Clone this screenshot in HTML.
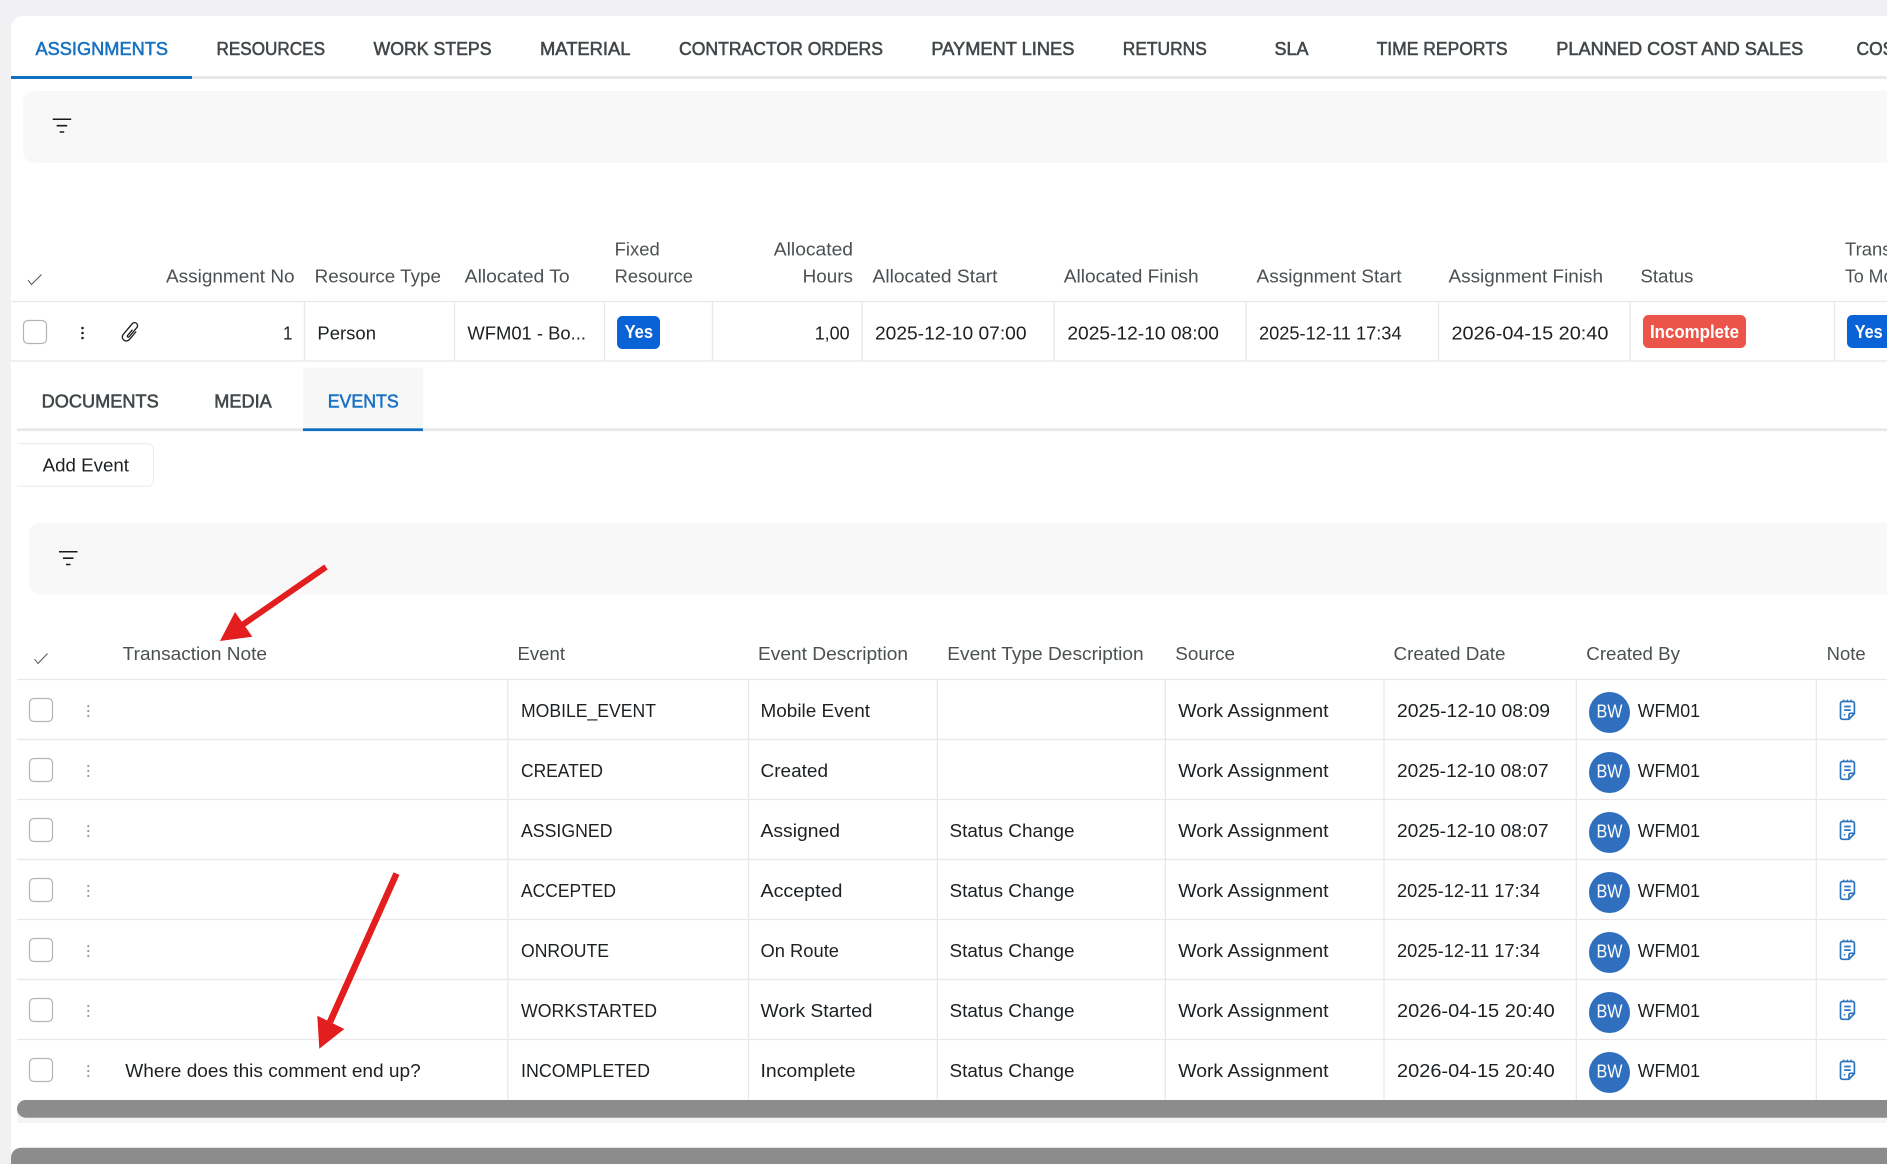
<!DOCTYPE html>
<html lang="en">
<head>
<meta charset="utf-8">
<title>Assignments</title>
<style>
html,body{margin:0;padding:0;width:1887px;height:1164px;overflow:hidden;background:#f1f0f3}
svg{display:block;font-family:"Liberation Sans",sans-serif;font-size:18px}
.t{fill:#42474a;stroke:#42474a;stroke-width:.55}
.a{fill:#1a72c2;stroke:#1a72c2;stroke-width:.55}
.h{fill:#4b5053}
.c{fill:#1c2023}
.l{stroke:#e8e8e8;stroke-width:1.3;fill:none}
.b{fill:#fff;font-weight:bold}
</style>
</head>
<body>
<svg width="1887" height="1164" viewBox="0 0 1887 1164" xmlns="http://www.w3.org/2000/svg">
<defs>
<symbol id="cb" overflow="visible"><rect x=".5" y=".5" width="23" height="23" rx="4.500" fill="#fff" stroke="#b4b4b4" stroke-width="1.200"/></symbol>
<symbol id="dg" overflow="visible"><circle cx="0" cy="0" r="1.100" fill="#9a9a9a"/><circle cx="0" cy="5" r="1.100" fill="#9a9a9a"/><circle cx="0" cy="10" r="1.100" fill="#9a9a9a"/></symbol>
<symbol id="fl" overflow="visible"><path d="M0 .75H18.500M4 7.200H14.500M7 13.500H11.500" stroke="#1a1a1a" stroke-width="1.600" fill="none"/></symbol>
<symbol id="nt" overflow="visible"><g fill="none" stroke="#2a74c0" stroke-width="1.700"><path d="M2.800 2.200H12.700a2 2 0 0 1 2 2V14.200L9.200 20H2.800a2 2 0 0 1-2-2V4.200a2 2 0 0 1 2-2z"/><path d="M14.700 14H10.800a1.500 1.500 0 0 0-1.500 1.500V20"/><path d="M4.500 7.200H11M4.500 10.800H11"/><path d="M4 15.500H5.500" stroke-width="1.500"/><path d="M4 .3V1.800M7.700 .3V1.800M11.400 .3V1.800" stroke-width="1.300"/></g></symbol>
<symbol id="av" overflow="visible"><circle cx="20.500" cy="20.500" r="20.500" fill="#2f6fbd"/><text x="7.500" y="25.500" fill="#fff" textLength="26" lengthAdjust="spacingAndGlyphs">BW</text></symbol>
</defs>

<!-- card -->
<path d="M11 1164V28a12 12 0 0 1 12-12H1887V1164z" fill="#fff"/>

<!-- top tabs -->
<rect x="11" y="76" width="1876" height="3" fill="#e8e8e8"/>
<rect x="11" y="76" width="181" height="3" fill="#1170c4"/>
<text class="a" x="35.500" y="55" textLength="132.500" lengthAdjust="spacingAndGlyphs">ASSIGNMENTS</text>
<text class="t" x="216.500" y="55" textLength="108.500" lengthAdjust="spacingAndGlyphs">RESOURCES</text>
<text class="t" x="373.500" y="55" textLength="118" lengthAdjust="spacingAndGlyphs">WORK STEPS</text>
<text class="t" x="540" y="55" textLength="90.500" lengthAdjust="spacingAndGlyphs">MATERIAL</text>
<text class="t" x="679" y="55" textLength="204" lengthAdjust="spacingAndGlyphs">CONTRACTOR ORDERS</text>
<text class="t" x="931.400" y="55" textLength="143" lengthAdjust="spacingAndGlyphs">PAYMENT LINES</text>
<text class="t" x="1122.800" y="55" textLength="84" lengthAdjust="spacingAndGlyphs">RETURNS</text>
<text class="t" x="1274.500" y="55" textLength="34" lengthAdjust="spacingAndGlyphs">SLA</text>
<text class="t" x="1376.600" y="55" textLength="131" lengthAdjust="spacingAndGlyphs">TIME REPORTS</text>
<text class="t" x="1556.300" y="55" textLength="247" lengthAdjust="spacingAndGlyphs">PLANNED COST AND SALES</text>
<text class="t" x="1856.500" y="55" textLength="60" lengthAdjust="spacingAndGlyphs">COSTS</text>

<!-- filter bar 1 -->
<rect x="23" y="91" width="1900" height="72" rx="11" fill="#f8f8f8"/>
<use href="#fl" x="52.700" y="118.500"/>

<!-- assignments header -->
<path d="M28 280L31.500 284.500L41.500 274.500" fill="none" stroke="#555" stroke-width="1"/>
<text class="h" x="166" y="282.700" textLength="128.600" lengthAdjust="spacingAndGlyphs">Assignment No</text>
<text class="h" x="314.700" y="282.700" textLength="126.300" lengthAdjust="spacingAndGlyphs">Resource Type</text>
<text class="h" x="464.700" y="282.700" textLength="105" lengthAdjust="spacingAndGlyphs">Allocated To</text>
<text class="h" x="614.700" y="255.500" textLength="45" lengthAdjust="spacingAndGlyphs">Fixed</text>
<text class="h" x="614.700" y="282.700" textLength="78.300" lengthAdjust="spacingAndGlyphs">Resource</text>
<text class="h" x="773.800" y="255.500" textLength="79.200" lengthAdjust="spacingAndGlyphs">Allocated</text>
<text class="h" x="802.700" y="282.700" textLength="50.300" lengthAdjust="spacingAndGlyphs">Hours</text>
<text class="h" x="872.500" y="282.700" textLength="125" lengthAdjust="spacingAndGlyphs">Allocated Start</text>
<text class="h" x="1063.800" y="282.700" textLength="134.800" lengthAdjust="spacingAndGlyphs">Allocated Finish</text>
<text class="h" x="1256.500" y="282.700" textLength="145" lengthAdjust="spacingAndGlyphs">Assignment Start</text>
<text class="h" x="1448.500" y="282.700" textLength="154.500" lengthAdjust="spacingAndGlyphs">Assignment Finish</text>
<text class="h" x="1640.400" y="282.700" textLength="53" lengthAdjust="spacingAndGlyphs">Status</text>
<text class="h" x="1845" y="255.500" textLength="68" lengthAdjust="spacingAndGlyphs">Transfer</text>
<text class="h" x="1845" y="282.700" textLength="76" lengthAdjust="spacingAndGlyphs">To Mobile</text>

<!-- assignments row -->
<path class="l" d="M11 301.500H1887M11 361H1887M304.500 301.500V361M454.500 301.500V361M604.500 301.500V361M712.500 301.500V361M862 301.500V361M1054 301.500V361M1246 301.500V361M1438.500 301.500V361M1630 301.500V361M1834.500 301.500V361"/>
<use href="#cb" x="23" y="320"/>
<circle cx="82.500" cy="328" r="1.300" fill="#222"/><circle cx="82.500" cy="333" r="1.300" fill="#222"/><circle cx="82.500" cy="338" r="1.300" fill="#222"/>
<path transform="translate(130.500 332) rotate(40)" d="M4 -4V6.500a4 4 0 0 1-8 0V-7.500a3 3 0 0 1 6 0V4.500a1 1 0 0 1-2 0V-3" fill="none" stroke="#1a1a1a" stroke-width="1.300"/>
<text class="c" x="283" y="339.300" textLength="9.500" lengthAdjust="spacingAndGlyphs">1</text>
<text class="c" x="317.400" y="339.300" textLength="58.600" lengthAdjust="spacingAndGlyphs">Person</text>
<text class="c" x="467.400" y="339.300" textLength="118.600" lengthAdjust="spacingAndGlyphs">WFM01 - Bo...</text>
<rect x="617" y="316" width="43" height="33" rx="5.500" fill="#0a63d6"/>
<text class="b" x="624.600" y="338" textLength="28.400" lengthAdjust="spacingAndGlyphs">Yes</text>
<text class="c" x="814.700" y="339.300" textLength="35" lengthAdjust="spacingAndGlyphs">1,00</text>
<text class="c" x="875" y="339.300" textLength="151.500" lengthAdjust="spacingAndGlyphs">2025-12-10 07:00</text>
<text class="c" x="1067.400" y="339.300" textLength="151.500" lengthAdjust="spacingAndGlyphs">2025-12-10 08:00</text>
<text class="c" x="1259" y="339.300" textLength="142.600" lengthAdjust="spacingAndGlyphs">2025-12-11 17:34</text>
<text class="c" x="1451.500" y="339.300" textLength="156.900" lengthAdjust="spacingAndGlyphs">2026-04-15 20:40</text>
<rect x="1643" y="315" width="103" height="33" rx="5.500" fill="#eb5549"/>
<text class="b" x="1650" y="338" textLength="89" lengthAdjust="spacingAndGlyphs">Incomplete</text>
<rect x="1847" y="315" width="60" height="33" rx="5.500" fill="#0a63d6"/>
<text class="b" x="1854.700" y="338" textLength="28" lengthAdjust="spacingAndGlyphs">Yes</text>

<!-- sub tabs -->
<rect x="303" y="368" width="120" height="60" fill="#f7f7f7"/>
<rect x="17" y="428.300" width="1870" height="2.800" fill="#e8e8e8"/>
<rect x="303" y="428.300" width="120" height="2.800" fill="#1170c4"/>
<text class="t" x="41.700" y="407.300" textLength="117" lengthAdjust="spacingAndGlyphs">DOCUMENTS</text>
<text class="t" x="214.300" y="407.300" textLength="57.400" lengthAdjust="spacingAndGlyphs">MEDIA</text>
<text class="a" x="327.700" y="407.300" textLength="71" lengthAdjust="spacingAndGlyphs">EVENTS</text>

<!-- add event -->
<path d="M17 443.800H147.500a6 6 0 0 1 6 6V480.300a6 6 0 0 1-6 6H17" fill="#fff" stroke="#e8e8e8" stroke-width="1"/>
<text class="c" x="42.700" y="471.300" textLength="86.300" lengthAdjust="spacingAndGlyphs">Add Event</text>

<!-- filter bar 2 -->
<rect x="29" y="523.300" width="1900" height="71" rx="11" fill="#f8f8f8"/>
<use href="#fl" x="59" y="551"/>

<!-- events header -->
<path d="M34.500 659L38 663.500L47.500 653.500" fill="none" stroke="#555" stroke-width="1"/>
<text class="h" x="122.700" y="660" textLength="144.300" lengthAdjust="spacingAndGlyphs">Transaction Note</text>
<text class="h" x="517.500" y="660" textLength="47.500" lengthAdjust="spacingAndGlyphs">Event</text>
<text class="h" x="758" y="660" textLength="150" lengthAdjust="spacingAndGlyphs">Event Description</text>
<text class="h" x="947.300" y="660" textLength="196.400" lengthAdjust="spacingAndGlyphs">Event Type Description</text>
<text class="h" x="1175.300" y="660" textLength="59.700" lengthAdjust="spacingAndGlyphs">Source</text>
<text class="h" x="1393.500" y="660" textLength="112" lengthAdjust="spacingAndGlyphs">Created Date</text>
<text class="h" x="1586.300" y="660" textLength="93.700" lengthAdjust="spacingAndGlyphs">Created By</text>
<text class="h" x="1826.700" y="660" textLength="39" lengthAdjust="spacingAndGlyphs">Note</text>

<!-- events grid -->
<path class="l" d="M17 679.500H1887M17 739.500H1887M17 799.500H1887M17 859.500H1887M17 919.500H1887M17 979.500H1887M17 1039.500H1887M507.800 679.500V1100M748.500 679.500V1100M937.300 679.500V1100M1165.300 679.500V1100M1384 679.500V1100M1576.300 679.500V1100M1816.300 679.500V1100"/>

<!-- row 1 -->
<use href="#cb" x="29" y="698"/><use href="#dg" x="88.300" y="706"/>
<text class="c" x="521" y="717" textLength="135" lengthAdjust="spacingAndGlyphs">MOBILE_EVENT</text>
<text class="c" x="760.500" y="717" textLength="109.500" lengthAdjust="spacingAndGlyphs">Mobile Event</text>
<text class="c" x="1178.300" y="717" textLength="150.200" lengthAdjust="spacingAndGlyphs">Work Assignment</text>
<text class="c" x="1397" y="717" textLength="153" lengthAdjust="spacingAndGlyphs">2025-12-10 08:09</text>
<use href="#av" x="1589" y="692"/>
<text class="c" x="1637.700" y="717" textLength="62.300" lengthAdjust="spacingAndGlyphs">WFM01</text>
<use href="#nt" x="1839.700" y="699.300"/>

<!-- row 2 -->
<use href="#cb" x="29" y="758"/><use href="#dg" x="88.300" y="766"/>
<text class="c" x="521" y="777" textLength="82" lengthAdjust="spacingAndGlyphs">CREATED</text>
<text class="c" x="760.500" y="777" textLength="67.500" lengthAdjust="spacingAndGlyphs">Created</text>
<text class="c" x="1178.300" y="777" textLength="150.200" lengthAdjust="spacingAndGlyphs">Work Assignment</text>
<text class="c" x="1397" y="777" textLength="151.500" lengthAdjust="spacingAndGlyphs">2025-12-10 08:07</text>
<use href="#av" x="1589" y="752"/>
<text class="c" x="1637.700" y="777" textLength="62.300" lengthAdjust="spacingAndGlyphs">WFM01</text>
<use href="#nt" x="1839.700" y="759.300"/>

<!-- row 3 -->
<use href="#cb" x="29" y="818"/><use href="#dg" x="88.300" y="826"/>
<text class="c" x="521" y="837" textLength="91.500" lengthAdjust="spacingAndGlyphs">ASSIGNED</text>
<text class="c" x="760.500" y="837" textLength="79.500" lengthAdjust="spacingAndGlyphs">Assigned</text>
<text class="c" x="949.500" y="837" textLength="125" lengthAdjust="spacingAndGlyphs">Status Change</text>
<text class="c" x="1178.300" y="837" textLength="150.200" lengthAdjust="spacingAndGlyphs">Work Assignment</text>
<text class="c" x="1397" y="837" textLength="151.500" lengthAdjust="spacingAndGlyphs">2025-12-10 08:07</text>
<use href="#av" x="1589" y="812"/>
<text class="c" x="1637.700" y="837" textLength="62.300" lengthAdjust="spacingAndGlyphs">WFM01</text>
<use href="#nt" x="1839.700" y="819.300"/>

<!-- row 4 -->
<use href="#cb" x="29" y="878"/><use href="#dg" x="88.300" y="886"/>
<text class="c" x="521" y="897" textLength="95" lengthAdjust="spacingAndGlyphs">ACCEPTED</text>
<text class="c" x="760.500" y="897" textLength="81.900" lengthAdjust="spacingAndGlyphs">Accepted</text>
<text class="c" x="949.500" y="897" textLength="125" lengthAdjust="spacingAndGlyphs">Status Change</text>
<text class="c" x="1178.300" y="897" textLength="150.200" lengthAdjust="spacingAndGlyphs">Work Assignment</text>
<text class="c" x="1397" y="897" textLength="143" lengthAdjust="spacingAndGlyphs">2025-12-11 17:34</text>
<use href="#av" x="1589" y="872"/>
<text class="c" x="1637.700" y="897" textLength="62.300" lengthAdjust="spacingAndGlyphs">WFM01</text>
<use href="#nt" x="1839.700" y="879.300"/>

<!-- row 5 -->
<use href="#cb" x="29" y="938"/><use href="#dg" x="88.300" y="946"/>
<text class="c" x="521" y="957" textLength="88" lengthAdjust="spacingAndGlyphs">ONROUTE</text>
<text class="c" x="760.500" y="957" textLength="78.500" lengthAdjust="spacingAndGlyphs">On Route</text>
<text class="c" x="949.500" y="957" textLength="125" lengthAdjust="spacingAndGlyphs">Status Change</text>
<text class="c" x="1178.300" y="957" textLength="150.200" lengthAdjust="spacingAndGlyphs">Work Assignment</text>
<text class="c" x="1397" y="957" textLength="143" lengthAdjust="spacingAndGlyphs">2025-12-11 17:34</text>
<use href="#av" x="1589" y="932"/>
<text class="c" x="1637.700" y="957" textLength="62.300" lengthAdjust="spacingAndGlyphs">WFM01</text>
<use href="#nt" x="1839.700" y="939.300"/>

<!-- row 6 -->
<use href="#cb" x="29" y="998"/><use href="#dg" x="88.300" y="1006"/>
<text class="c" x="521" y="1017" textLength="136" lengthAdjust="spacingAndGlyphs">WORKSTARTED</text>
<text class="c" x="760.500" y="1017" textLength="112" lengthAdjust="spacingAndGlyphs">Work Started</text>
<text class="c" x="949.500" y="1017" textLength="125" lengthAdjust="spacingAndGlyphs">Status Change</text>
<text class="c" x="1178.300" y="1017" textLength="150.200" lengthAdjust="spacingAndGlyphs">Work Assignment</text>
<text class="c" x="1397" y="1017" textLength="157.700" lengthAdjust="spacingAndGlyphs">2026-04-15 20:40</text>
<use href="#av" x="1589" y="992"/>
<text class="c" x="1637.700" y="1017" textLength="62.300" lengthAdjust="spacingAndGlyphs">WFM01</text>
<use href="#nt" x="1839.700" y="999.300"/>

<!-- row 7 -->
<use href="#cb" x="29" y="1058"/><use href="#dg" x="88.300" y="1066"/>
<text class="c" x="125.300" y="1077" textLength="295.400" lengthAdjust="spacingAndGlyphs">Where does this comment end up?</text>
<text class="c" x="521" y="1077" textLength="129" lengthAdjust="spacingAndGlyphs">INCOMPLETED</text>
<text class="c" x="760.500" y="1077" textLength="95.100" lengthAdjust="spacingAndGlyphs">Incomplete</text>
<text class="c" x="949.500" y="1077" textLength="125" lengthAdjust="spacingAndGlyphs">Status Change</text>
<text class="c" x="1178.300" y="1077" textLength="150.200" lengthAdjust="spacingAndGlyphs">Work Assignment</text>
<text class="c" x="1397" y="1077" textLength="157.700" lengthAdjust="spacingAndGlyphs">2026-04-15 20:40</text>
<use href="#av" x="1589" y="1052"/>
<text class="c" x="1637.700" y="1077" textLength="62.300" lengthAdjust="spacingAndGlyphs">WFM01</text>
<use href="#nt" x="1839.700" y="1059.300"/>

<!-- scrollbars -->
<rect x="17" y="1100" width="1870" height="23" fill="#f5f5f5"/>
<rect x="17" y="1100" width="1900" height="17.700" rx="8.800" fill="#8c8c8c"/>
<rect x="11" y="1147.700" width="1900" height="30" rx="10" fill="#8c8c8c"/>

<!-- red arrows -->
<g fill="#e31e1e" stroke="none">
<path d="M326 567L243 624.500" stroke="#e31e1e" stroke-width="6" fill="none"/>
<path d="M220 641L235 612L252.300 636.700z"/>
<path d="M396.500 873.600L330 1022" stroke="#e31e1e" stroke-width="6.500" fill="none"/>
<path d="M319.300 1048.700L317.300 1015.700L344.300 1029z"/>
</g>
</svg>
</body>
</html>
